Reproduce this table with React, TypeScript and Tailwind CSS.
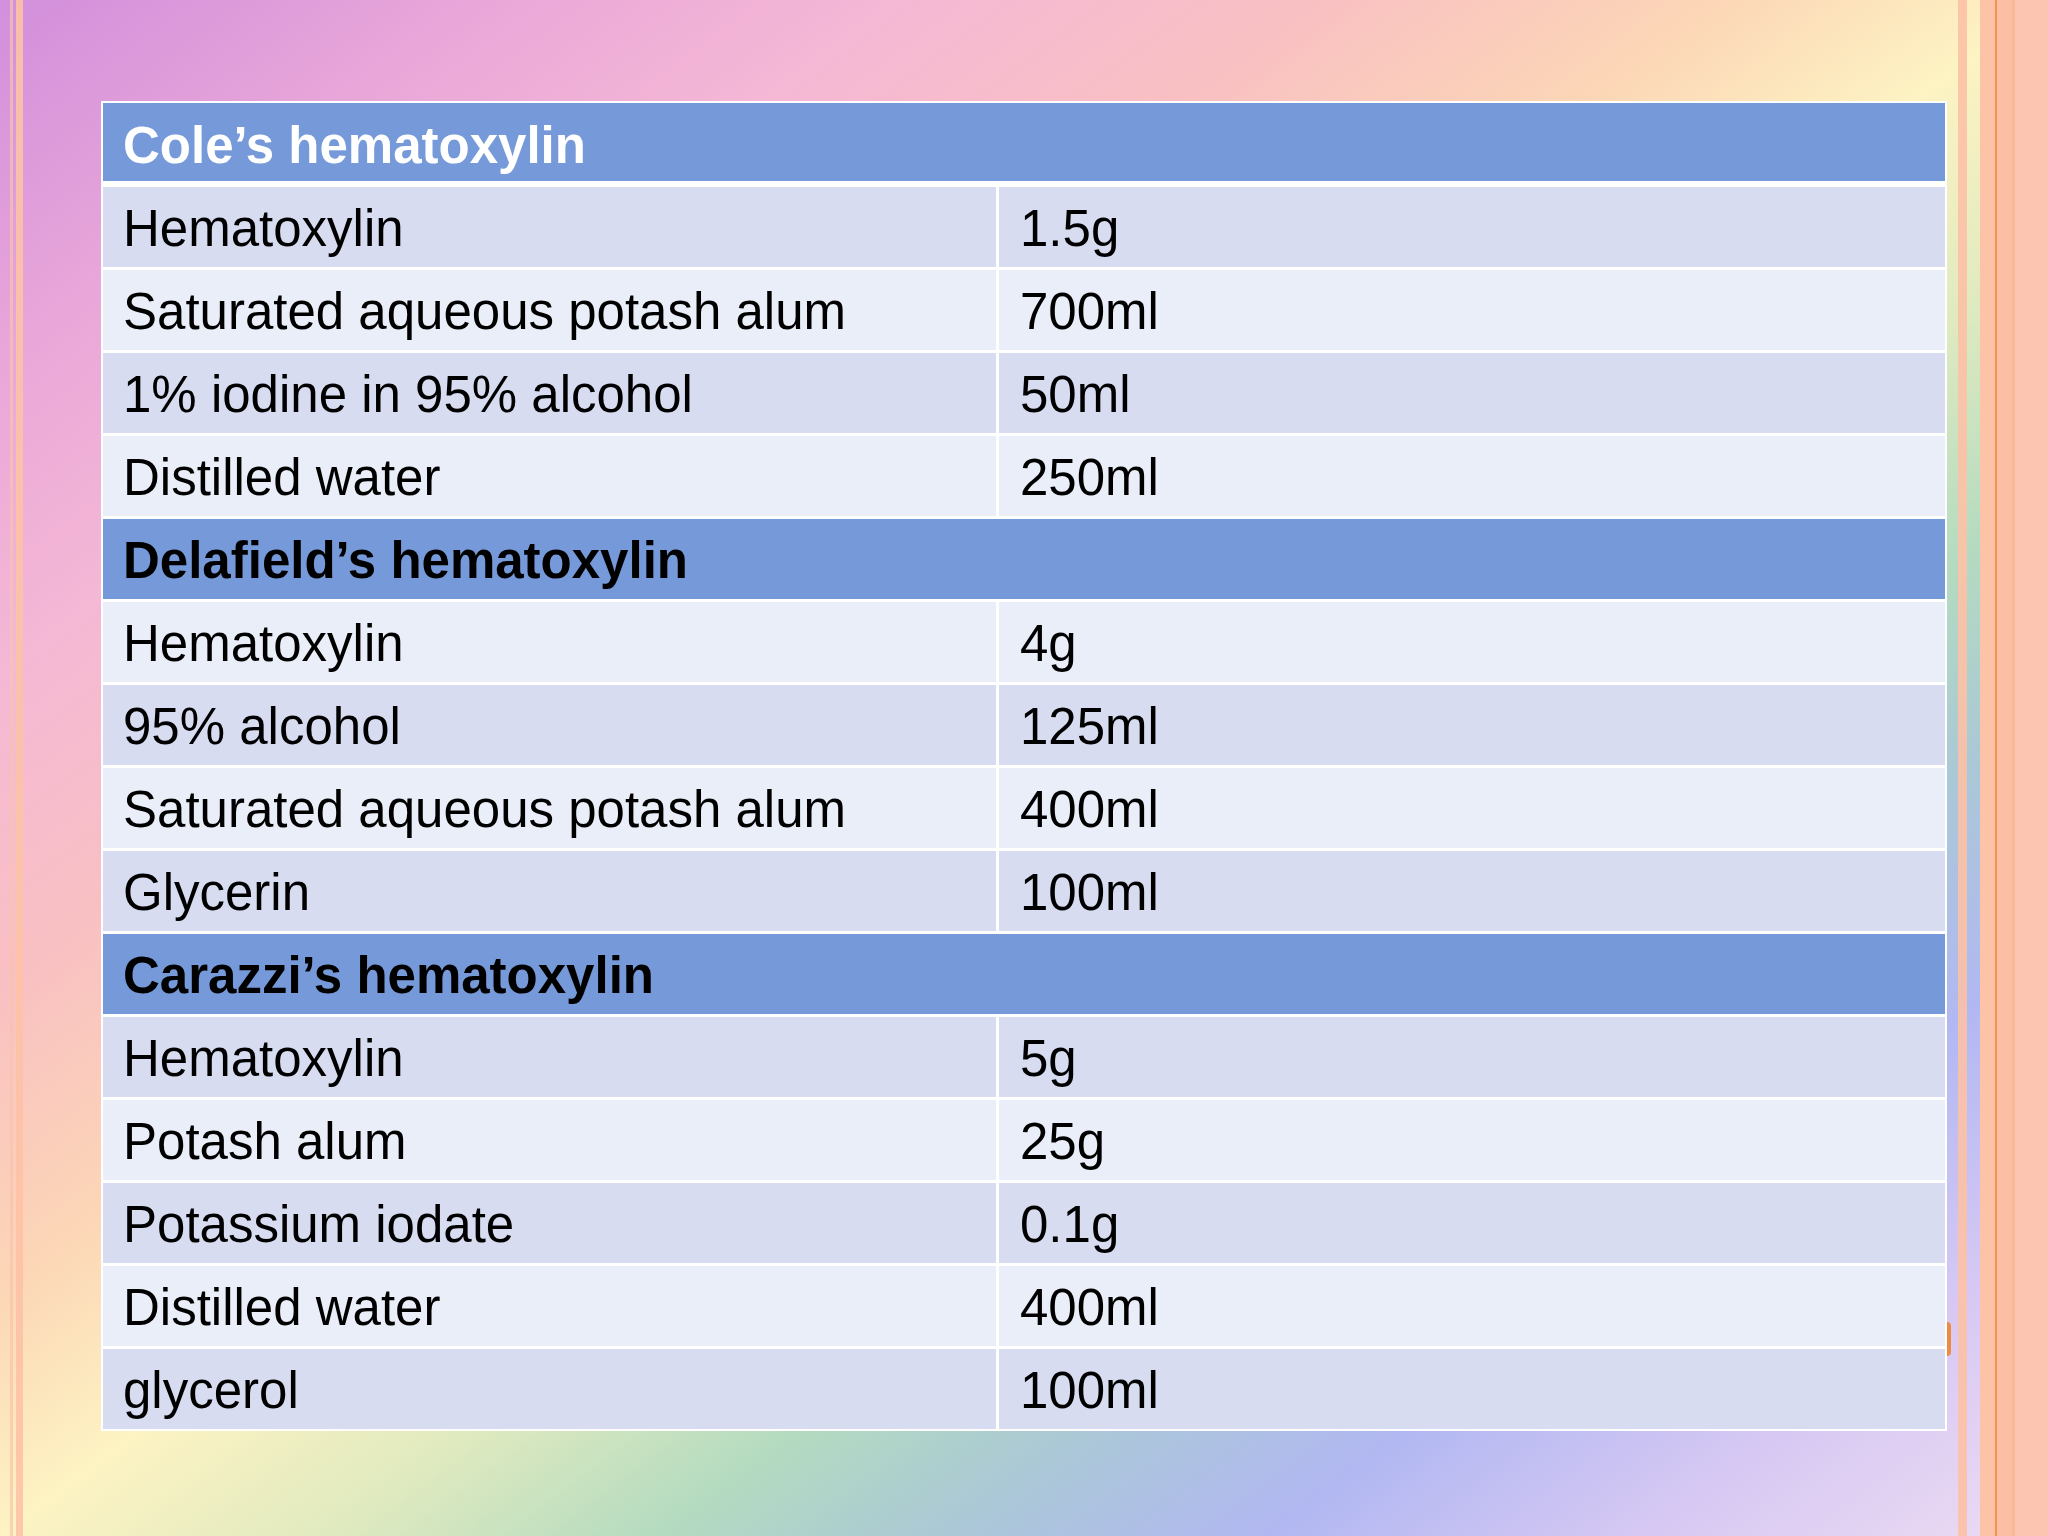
import React from "react";

type Row = { kind: "head"; text: string; white?: boolean } | { kind: "item"; a: string; b: string };

const rows: Row[] = [
  { kind: "head", text: "Cole’s hematoxylin", white: true },
  { kind: "item", a: "Hematoxylin", b: "1.5g" },
  { kind: "item", a: "Saturated aqueous potash alum", b: "700ml" },
  { kind: "item", a: "1% iodine in 95% alcohol", b: "50ml" },
  { kind: "item", a: "Distilled water", b: "250ml" },
  { kind: "head", text: "Delafield’s hematoxylin" },
  { kind: "item", a: "Hematoxylin", b: "4g" },
  { kind: "item", a: "95% alcohol", b: "125ml" },
  { kind: "item", a: "Saturated aqueous potash alum", b: "400ml" },
  { kind: "item", a: "Glycerin", b: "100ml" },
  { kind: "head", text: "Carazzi’s hematoxylin" },
  { kind: "item", a: "Hematoxylin", b: "5g" },
  { kind: "item", a: "Potash alum", b: "25g" },
  { kind: "item", a: "Potassium iodate", b: "0.1g" },
  { kind: "item", a: "Distilled water", b: "400ml" },
  { kind: "item", a: "glycerol", b: "100ml" },
];

export default function App() {
  return (
    <div
      className="w-[2048px] h-[1536px] overflow-hidden flex bg-[linear-gradient(to_bottom_right,#d28fdc_0%,#e9a7d9_12%,#f5b8d5_22%,#f9c0c3_32%,#fcd6b6_42%,#fdf3c3_50%,#e0eabf_58%,#b4dbc0_66%,#aac8d6_73%,#b2b8f2_81%,#d6c8f3_90%,#eedcf2_100%)]"
      style={{ fontFamily: '"Liberation Sans", Arial, sans-serif' }}
    >
      {/* left decorative stripes */}
      <div className="w-[10px] shrink-0" />
      <div className="w-[3px] shrink-0 bg-[#fbc2ad]/70" />
      <div className="w-[3px] shrink-0" />
      <div className="w-[7px] shrink-0 bg-[#fdc2a6]/90" />
      <div className="w-[78px] shrink-0" />

      {/* table */}
      <div className="w-[1846px] shrink-0 pt-[101px]">
        <div className="bg-white p-[2px] flex flex-col gap-[3px]">
          {rows.map((r, i) => {
            if (r.kind === "head") {
              const first = i === 0;
              return (
                <div
                  key={i}
                  className={
                    first
                      ? "h-[78px] mb-[3px] bg-[#7699d9] flex items-center pl-[20px] pt-[6px]"
                      : "h-[80px] bg-[#7699d9] flex items-center pl-[20px] pt-[3px]"
                  }
                >
                  <span
                    className={
                      r.white
                        ? "text-[51px] font-bold leading-none text-white"
                        : "text-[51px] font-bold leading-none text-black"
                    }
                  >
                    {r.text}
                  </span>
                </div>
              );
            }
            const dark = i % 2 === 1;
            const bg = dark ? "bg-[#d7dcf0]" : "bg-[#eaeef8]";
            return (
              <div key={i} className="h-[80px] flex gap-[3px]">
                <div className={`w-[893px] shrink-0 ${bg} flex items-center pl-[20px] pt-[3px]`}>
                  <span className="text-[51px] leading-none text-black">{r.a}</span>
                </div>
                <div className={`flex-1 ${bg} flex items-center pl-[21px] pt-[3px]`}>
                  <span className="text-[51px] leading-none text-black">{r.b}</span>
                </div>
              </div>
            );
          })}
        </div>
      </div>

      {/* right side */}
      <div className="w-[11px] shrink-0 relative">
        <div className="absolute left-0 top-[1322px] w-[4px] h-[34px] rounded-r-full bg-[#ef8a45]" />
      </div>
      <div className="w-[9px] shrink-0 bg-[#fcc1a6]/90" />
      <div className="w-[13px] shrink-0" />
      <div className="w-[68px] shrink-0 flex">
        <div className="w-[15px] bg-[#fcc3a9]" />
        <div className="w-[2px] bg-[#f3924d]" />
        <div className="w-[15px] bg-[#fcbfa5]" />
        <div className="w-[3px] bg-[#f9b898]" />
        <div className="flex-1 bg-[#fbc5b1]" />
      </div>
    </div>
  );
}
